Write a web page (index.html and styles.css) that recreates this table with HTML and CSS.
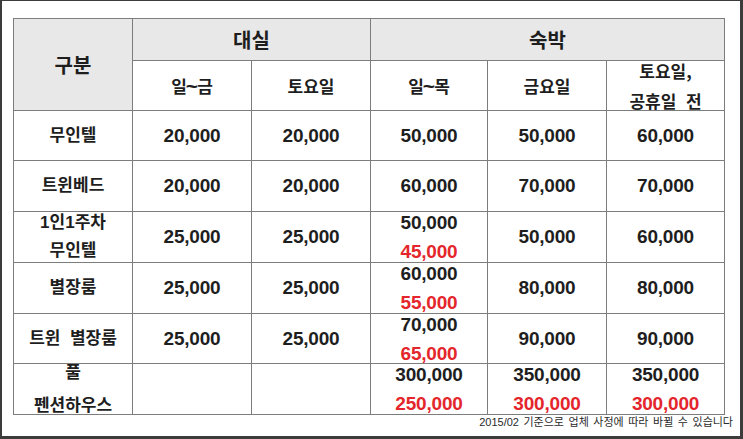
FILE: index.html
```html
<!DOCTYPE html>
<html lang="ko">
<head>
<meta charset="utf-8">
<title>요금표</title>
<link rel="stylesheet" href="styles.css">
</head>
<body>
<div class="frame">
  <table class="rates">
    <colgroup>
      <col class="w119"><col class="w119"><col class="w119"><col class="w117"><col class="w119"><col class="w118">
    </colgroup>
    <thead>
      <tr class="r-h1">
        <th rowspan="2" class="corner">구분</th>
        <th colspan="2" class="group">대실</th>
        <th colspan="3" class="group">숙박</th>
      </tr>
      <tr class="r-h2">
        <th class="sub">일<span class="tilde">~</span>금</th>
        <th class="sub">토요일</th>
        <th class="sub">일<span class="tilde">~</span>목</th>
        <th class="sub">금요일</th>
        <th class="sub"><div class="stack stack-head"><span>토요일,</span><span>공휴일&nbsp;&nbsp;전</span></div></th>
      </tr>
    </thead>
    <tbody>
      <tr class="r50">
        <th class="label">무인텔</th>
        <td>20,000</td><td>20,000</td><td>50,000</td><td>50,000</td><td>60,000</td>
      </tr>
      <tr class="r51">
        <th class="label">트윈베드</th>
        <td>20,000</td><td>20,000</td><td>60,000</td><td>70,000</td><td>70,000</td>
      </tr>
      <tr class="r51">
        <th class="label"><div class="stack stack-label"><span>1인1주차</span><span>무인텔</span></div></th>
        <td>25,000</td><td>25,000</td>
        <td><div class="stack"><span>50,000</span><span class="sale">45,000</span></div></td>
        <td>50,000</td><td>60,000</td>
      </tr>
      <tr class="r51">
        <th class="label">별장룸</th>
        <td>25,000</td><td>25,000</td>
        <td><div class="stack"><span>60,000</span><span class="sale">55,000</span></div></td>
        <td>80,000</td><td>80,000</td>
      </tr>
      <tr class="r50">
        <th class="label">트윈&nbsp;&nbsp;별장룸</th>
        <td>25,000</td><td>25,000</td>
        <td><div class="stack"><span>70,000</span><span class="sale">65,000</span></div></td>
        <td>90,000</td><td>90,000</td>
      </tr>
      <tr class="r51">
        <th class="label"><div class="stack stack-wide"><span>풀</span><span>펜션하우스</span></div></th>
        <td></td><td></td>
        <td><div class="stack"><span>300,000</span><span class="sale">250,000</span></div></td>
        <td><div class="stack"><span>350,000</span><span class="sale">300,000</span></div></td>
        <td><div class="stack"><span>350,000</span><span class="sale">300,000</span></div></td>
      </tr>
    </tbody>
  </table>
  <p class="note">2015/02 기준으로 업체 사정에 따라 바뀔 수 있습니다</p>
</div>
</body>
</html>
```
FILE: styles.css
```css
html, body {
  margin: 0;
  padding: 0;
  background: #ffffff;
}

.frame {
  box-sizing: border-box;
  width: 743px;
  height: 439px;
  border-style: solid;
  border-color: #3c3c3c;
  border-width: 1px 3px 3px 2px;
  padding: 17px 7px 0 11px;
  background: #ffffff;
  font-family: "Liberation Sans", "Noto Sans CJK KR", sans-serif;
  color: #1e1e1e;
}

.rates {
  table-layout: fixed;
  border-collapse: separate;
  border-spacing: 0;
  width: 712px;
  border-left: 1px solid #7d7d7d;
  border-top: 1px solid #7d7d7d;
}

.w119 { width: 119px; }
.w117 { width: 117px; }
.w118 { width: 118px; }

.rates th,
.rates td {
  box-sizing: border-box;
  border-right: 1px solid #7d7d7d;
  border-bottom: 1px solid #7d7d7d;
  padding: 0;
  text-align: center;
  vertical-align: middle;
  font-weight: 700;
  white-space: nowrap;
}

.rates td {
  font-size: 19px;
  line-height: 22px;
  letter-spacing: -0.2px;
}

.r-h1 { height: 42px; }
.r-h2 { height: 50px; }
.r50 { height: 50px; }
.r51 { height: 51px; }

.stack {
  height: 40px;
  display: flex;
  flex-direction: column;
  justify-content: center;
  align-items: center;
  line-height: 29px;
}

.stack > span {
  flex: none;
}

.stack-head {
  line-height: 30px;
}

.stack-label {
  line-height: 28px;
}

.stack-wide {
  line-height: 33px;
}

.corner,
.group {
  background: #e8e8e8;
  font-size: 20px;
  line-height: 24px;
  font-family: "Noto Sans CJK KR", "Liberation Sans", sans-serif;
  font-weight: 900;
}

.sub {
  font-size: 17px;
  line-height: 24px;
  background: #ffffff;
  font-family: "Noto Sans CJK KR", "Liberation Sans", sans-serif;
}

.tilde {
  font-family: "Liberation Sans", sans-serif;
  font-size: 21px;
  font-weight: 700;
  line-height: 1;
  margin: 0 -1px;
}

.label {
  font-size: 17px;
  line-height: 24px;
}

.sale {
  color: #e4262c;
}

.note {
  margin: 0;
  text-align: right;
  font-size: 11px;
  line-height: 14px;
  color: #2a2a2a;
  letter-spacing: 0;
  word-spacing: 1.5px;
}
```
